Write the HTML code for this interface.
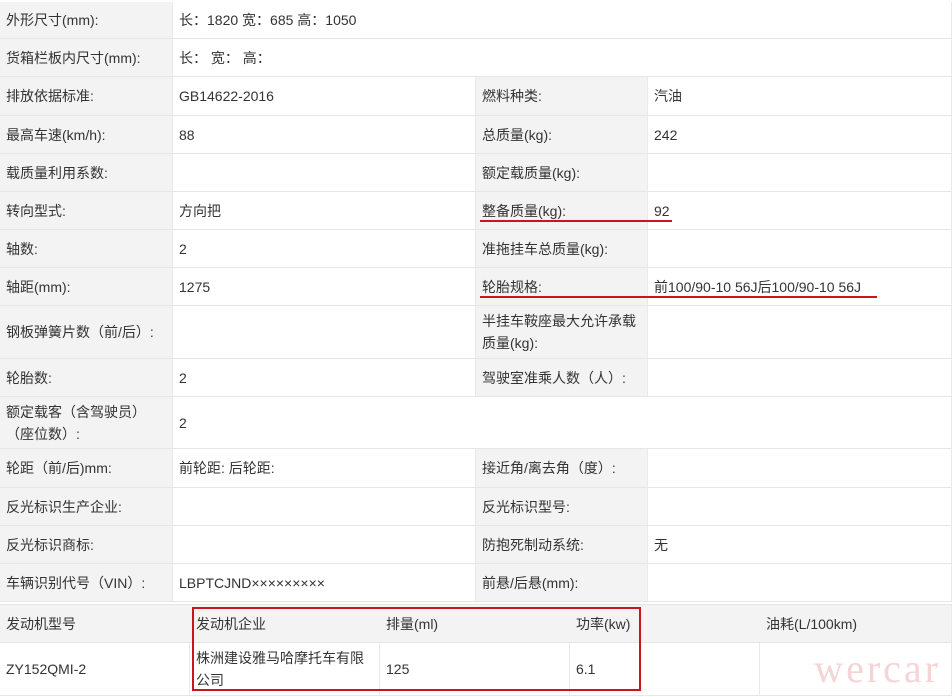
<!DOCTYPE html>
<html><head><meta charset="utf-8"><style>
body{margin:0;width:952px;height:697px;background:#fff;position:relative;overflow:hidden;font-family:"Liberation Sans","Noto Sans CJK SC",sans-serif;font-size:14px;color:#333}
.c{position:absolute;box-sizing:border-box;border-bottom:1px solid #e6e6e6;border-right:1px solid #e9e9e9;display:flex;align-items:center;padding-left:6px;line-height:22px}
.l{background:#f3f3f3}
.u{position:absolute;height:2px;background:#c8161d}
.box{position:absolute;border:2px solid #c8161d;box-sizing:border-box}
</style></head><body>
<div class="c l" style="left:0;top:2px;width:173px;height:37px">外形尺寸(mm):</div>
<div class="c" style="left:173px;top:2px;width:779px;height:37px">长：1820 宽：685 高：1050</div>
<div class="c l" style="left:0;top:39px;width:173px;height:38px">货箱栏板内尺寸(mm):</div>
<div class="c" style="left:173px;top:39px;width:779px;height:38px">长： 宽： 高：</div>

<div class="c l" style="left:0;top:77px;width:173px;height:39px">排放依据标准:</div>
<div class="c" style="left:173px;top:77px;width:303px;height:39px">GB14622-2016</div>
<div class="c l" style="left:476px;top:77px;width:172px;height:39px">燃料种类:</div>
<div class="c" style="left:648px;top:77px;width:304px;height:39px">汽油</div>

<div class="c l" style="left:0;top:116px;width:173px;height:38px">最高车速(km/h):</div>
<div class="c" style="left:173px;top:116px;width:303px;height:38px">88</div>
<div class="c l" style="left:476px;top:116px;width:172px;height:38px">总质量(kg):</div>
<div class="c" style="left:648px;top:116px;width:304px;height:38px">242</div>

<div class="c l" style="left:0;top:154px;width:173px;height:38px">载质量利用系数:</div>
<div class="c" style="left:173px;top:154px;width:303px;height:38px"></div>
<div class="c l" style="left:476px;top:154px;width:172px;height:38px">额定载质量(kg):</div>
<div class="c" style="left:648px;top:154px;width:304px;height:38px"></div>

<div class="c l" style="left:0;top:192px;width:173px;height:38px">转向型式:</div>
<div class="c" style="left:173px;top:192px;width:303px;height:38px">方向把</div>
<div class="c l" style="left:476px;top:192px;width:172px;height:38px">整备质量(kg):</div>
<div class="c" style="left:648px;top:192px;width:304px;height:38px">92</div>

<div class="c l" style="left:0;top:230px;width:173px;height:38px">轴数:</div>
<div class="c" style="left:173px;top:230px;width:303px;height:38px">2</div>
<div class="c l" style="left:476px;top:230px;width:172px;height:38px">准拖挂车总质量(kg):</div>
<div class="c" style="left:648px;top:230px;width:304px;height:38px"></div>

<div class="c l" style="left:0;top:268px;width:173px;height:38px">轴距(mm):</div>
<div class="c" style="left:173px;top:268px;width:303px;height:38px">1275</div>
<div class="c l" style="left:476px;top:268px;width:172px;height:38px">轮胎规格:</div>
<div class="c" style="left:648px;top:268px;width:304px;height:38px">前100/90-10 56J后100/90-10 56J</div>

<div class="c l" style="left:0;top:306px;width:173px;height:53px">钢板弹簧片数（前/后）:</div>
<div class="c" style="left:173px;top:306px;width:303px;height:53px"></div>
<div class="c l" style="left:476px;top:306px;width:172px;height:53px">半挂车鞍座最大允许承载质量(kg):</div>
<div class="c" style="left:648px;top:306px;width:304px;height:53px"></div>

<div class="c l" style="left:0;top:359px;width:173px;height:38px">轮胎数:</div>
<div class="c" style="left:173px;top:359px;width:303px;height:38px">2</div>
<div class="c l" style="left:476px;top:359px;width:172px;height:38px">驾驶室准乘人数（人）:</div>
<div class="c" style="left:648px;top:359px;width:304px;height:38px"></div>

<div class="c l" style="left:0;top:397px;width:173px;height:52px">额定载客（含驾驶员）<br>（座位数）:</div>
<div class="c" style="left:173px;top:397px;width:779px;height:52px">2</div>

<div class="c l" style="left:0;top:449px;width:173px;height:39px">轮距（前/后)mm:</div>
<div class="c" style="left:173px;top:449px;width:303px;height:39px">前轮距: 后轮距:</div>
<div class="c l" style="left:476px;top:449px;width:172px;height:39px">接近角/离去角（度）:</div>
<div class="c" style="left:648px;top:449px;width:304px;height:39px"></div>

<div class="c l" style="left:0;top:488px;width:173px;height:38px">反光标识生产企业:</div>
<div class="c" style="left:173px;top:488px;width:303px;height:38px"></div>
<div class="c l" style="left:476px;top:488px;width:172px;height:38px">反光标识型号:</div>
<div class="c" style="left:648px;top:488px;width:304px;height:38px"></div>

<div class="c l" style="left:0;top:526px;width:173px;height:38px">反光标识商标:</div>
<div class="c" style="left:173px;top:526px;width:303px;height:38px"></div>
<div class="c l" style="left:476px;top:526px;width:172px;height:38px">防抱死制动系统:</div>
<div class="c" style="left:648px;top:526px;width:304px;height:38px">无</div>

<div class="c l" style="left:0;top:564px;width:173px;height:38px">车辆识别代号（VIN）:</div>
<div class="c" style="left:173px;top:564px;width:303px;height:38px">LBPTCJND×××××××××</div>
<div class="c l" style="left:476px;top:564px;width:172px;height:38px">前悬/后悬(mm):</div>
<div class="c" style="left:648px;top:564px;width:304px;height:38px"></div>

<div class="c l" style="left:0;top:604px;width:952px;height:39px;border-top:1px solid #e6e6e6"></div>
<div class="c" style="left:0;top:604px;width:190px;height:39px;border:none">发动机型号</div>
<div class="c" style="left:190px;top:604px;width:190px;height:39px;border:none">发动机企业</div>
<div class="c" style="left:380px;top:604px;width:190px;height:39px;border:none">排量(ml)</div>
<div class="c" style="left:570px;top:604px;width:190px;height:39px;border:none">功率(kw)</div>
<div class="c" style="left:760px;top:604px;width:192px;height:39px;border:none">油耗(L/100km)</div>

<div class="c" style="left:0;top:643px;width:190px;height:53px">ZY152QMI-2</div>
<div class="c" style="left:190px;top:643px;width:190px;height:53px">株洲建设雅马哈摩托车有限<br>公司</div>
<div class="c" style="left:380px;top:643px;width:190px;height:53px">125</div>
<div class="c" style="left:570px;top:643px;width:190px;height:53px">6.1</div>
<div class="c" style="left:760px;top:643px;width:192px;height:53px;justify-content:flex-end;padding-right:10px;font-family:'Liberation Serif',serif;font-size:40px;letter-spacing:3px;color:#f6d3d6">wercar</div>

<div class="u" style="left:480px;top:220px;width:192px"></div>
<div class="u" style="left:480px;top:296px;width:397px"></div>
<div class="box" style="left:192px;top:607px;width:449px;height:84px"></div>
</body></html>
